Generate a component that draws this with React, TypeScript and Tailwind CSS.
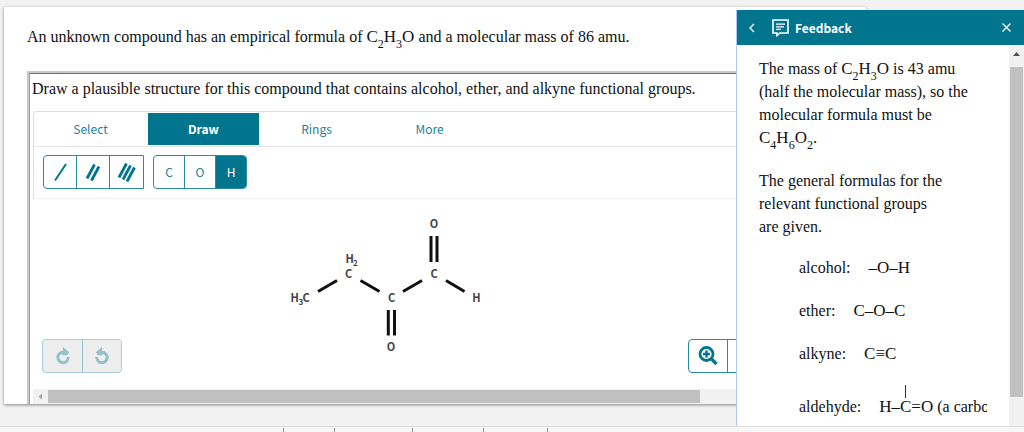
import type { ReactNode } from "react";
import { FaMagnifyingGlassPlus } from "react-icons/fa6";

const serif = "font-['Liberation_Serif',serif]";
const sans = "font-['Noto_Sans_CJK_SC',sans-serif]";

function Sub({ children }: { children: ReactNode }) {
  return <sub className="relative top-[6px] align-baseline text-[12px] leading-none">{children}</sub>;
}

function Formula({ children }: { children: ReactNode }) {
  return <span className="text-[17px] leading-none">{children}</span>;
}

function BondIcon({ count }: { count: number }) {
  const lines = [
    ["M6 20.500 L17 4"],
    ["M5 18.500 L12.500 4.500", "M9.500 20.500 L17 6.500"],
    ["M3 17.500 L10.500 3.500", "M7 19.500 L14.500 5.500", "M11 21.500 L18.500 7.500"],
  ][count - 1];
  return (
    <svg viewBox="0 0 22 24" className="h-6 w-[22px]" fill="none" stroke="#00758d" strokeWidth={count === 1 ? 2 : 2.8}>
      {lines.map((d) => (
        <path key={d} d={d} />
      ))}
    </svg>
  );
}

function RotateIcon({ flip = false }: { flip?: boolean }) {
  return (
    <svg viewBox="0 0 16 18" className={flip ? "h-[18px] w-4 -scale-x-100" : "h-[18px] w-4"}>
      <path d="M8.500 5.300 A5.200 5.200 0 1 0 13.200 10" fill="none" stroke="#94c1cb" strokeWidth="3" />
      <path d="M8 0 L14 5 L12.500 8 L7.500 8.500 Z" fill="#94c1cb" />
    </svg>
  );
}

const tabs = ["Select", "Draw", "Rings", "More"];
const bonds = ["Single bond", "Double bond", "Triple bond"];
const atoms = ["C", "O", "H"];

function Toolbar() {
  return (
    <div className="rounded-tl border-t border-l border-[#dedede]">
      <div className="flex h-[35px] items-start border-b border-[#e4e4e4] pt-px">
        {tabs.map((t) => (
          <button
            key={t}
            type="button"
            className={
              t === "Draw"
                ? "mx-px h-8 w-[111px] bg-[#00758d] text-[12px] font-bold text-white"
                : "h-8 w-[113px] text-[12px] text-[#1a8499]"
            }
          >
            {t}
          </button>
        ))}
      </div>
      <div className="flex gap-[9px] border-b border-[#eeeeee] px-[9px] pt-2 pb-[9px]">
        <div className="flex h-[34px] divide-x divide-[#2a8ba0] overflow-hidden rounded-l border border-[#2a8ba0]">
          {bonds.map((b, i) => (
            <button key={b} type="button" aria-label={b} className="flex w-[33px] items-center justify-center">
              <BondIcon count={i + 1} />
            </button>
          ))}
        </div>
        <div className="flex h-[34px] divide-x divide-[#2a8ba0] overflow-hidden rounded border border-[#2a8ba0]">
          {atoms.map((a) => (
            <button
              key={a}
              type="button"
              className={a === "H" ? "w-[30px] bg-[#00758d] text-[12px] text-white" : "w-[31px] text-[12px] text-[#1a8499]"}
            >
              {a}
            </button>
          ))}
        </div>
      </div>
    </div>
  );
}

function Molecule() {
  return (
    <svg width="200" height="144" viewBox="286 212 200 144" className="ml-[253px]" role="img" aria-label="Lewis structure">
      <g stroke="#111" strokeWidth="3" fill="none">
        <path d="M318 291.500 L337 280.500 M360.500 280.500 L379.500 291.500 M403 291.500 L422 280.500 M446 280.500 L464.500 291.500" />
        <path d="M431 236 V262 M437 236 V262 M388.300 310 V335.500 M394.500 310 V335.500" />
      </g>
      <g fill="#444" fontSize="11" fontWeight="700" fontFamily="'Noto Sans CJK SC', sans-serif">
        <text x="434" y="227.500" textAnchor="middle">O</text>
        <text x="345.500" y="263">H</text>
        <text x="353" y="266" fontSize="8">2</text>
        <text x="348.500" y="277.500" textAnchor="middle">C</text>
        <text x="290.500" y="301.500">H</text>
        <text x="298.500" y="304.500" fontSize="8">3</text>
        <text x="302.500" y="301.500">C</text>
        <text x="391.500" y="301.500" textAnchor="middle">C</text>
        <text x="434" y="277.500" textAnchor="middle">C</text>
        <text x="476.500" y="301.500" textAnchor="middle">H</text>
        <text x="391" y="350.500" textAnchor="middle">O</text>
      </g>
    </svg>
  );
}

function Canvas() {
  return (
    <div className="relative h-[190px] pt-[13px]">
      <Molecule />
      <div className="absolute right-[98px] bottom-4 left-[9px] flex justify-between">
        <div className="flex h-[34px] divide-x divide-[#94c1cb] rounded border border-[#a9ced6] bg-[#eeeeee]">
          <button type="button" aria-label="Redo" className="flex w-10 items-center justify-center">
            <RotateIcon />
          </button>
          <button type="button" aria-label="Undo" className="flex w-[38px] items-center justify-center">
            <RotateIcon flip />
          </button>
        </div>
        <div className="flex h-[34px] divide-x divide-[#2a8ba0] rounded border border-[#2a8ba0]">
          <button type="button" aria-label="Zoom in" className="flex w-[39px] items-center justify-center text-[#00758d]">
            <svg viewBox="0 0 20 20" className="h-5 w-5" fill="none" stroke="currentColor">
              <circle cx="8.500" cy="8" r="6.500" strokeWidth="2.800" />
              <path d="M8.500 4.500 V11.500 M5 8 H12" strokeWidth="2.400" />
              <path d="M13 12.500 L18.500 18" strokeWidth="3.200" />
            </svg>
          </button>
          <button type="button" aria-label="Reset zoom" className="flex w-[39px] items-center justify-center text-[#00758d]">
            <FaMagnifyingGlassPlus />
          </button>
        </div>
      </div>
    </div>
  );
}

function Question() {
  return (
    <main className="-mr-[130px] mt-[7px] ml-1 flex h-[397px] min-w-0 flex-1 flex-col bg-white pl-[23px] whitespace-nowrap shadow-[0_1px_3px_rgba(0,0,0,0.45)]">
      <p className={`${serif} h-16 pt-[18px] text-[16px] leading-6 text-[#111]`}>
        An unknown compound has an empirical formula of{" "}
        <Formula>
          C<Sub>2</Sub>H<Sub>3</Sub>O
        </Formula>{" "}
        and a molecular mass of 86 amu.
      </p>
      <section className="min-h-0 flex-1 overflow-hidden bg-[#c8c8c8] pt-[2px] pl-[2px]">
        <div className="flex h-full flex-col border-t border-l border-t-[#c5455a] border-l-[#e0808f] bg-white pl-[2px]">
          <p className={`${serif} h-[37px] pt-[3px] text-[16px] leading-6 text-[#111]`}>
            Draw a plausible structure for this compound that contains alcohol, ether, and alkyne functional groups.
          </p>
          <div className="pl-px">
            <Toolbar />
            <Canvas />
          </div>
          <div className="ml-px flex h-[15px] items-center bg-[#f1f1f1]">
            <svg viewBox="0 0 15 15" className="h-[15px] w-[15px]" fill="#a3a3a3">
              <path d="M9 4.500 V10.500 L5.500 7.500 Z" />
            </svg>
            <div className="h-[13px] w-[652px] bg-[#c1c1c1]" />
          </div>
        </div>
      </section>
    </main>
  );
}

function Group({ name, children }: { name: string; children: ReactNode }) {
  return (
    <div className="flex h-[23px] gap-[18px]">
      <dt>{name}:</dt>
      <dd>{children}</dd>
    </div>
  );
}

function Feedback() {
  return (
    <aside className="relative z-10 mt-[10px] flex h-[416px] w-72 shrink-0 flex-col border-l border-[#a9c9f0] bg-white">
      <header className={`${sans} flex h-[35px] shrink-0 items-center bg-[#00758d] pr-[13px] pl-[11px] text-white`}>
        <button type="button" aria-label="Back">
          <svg viewBox="0 0 8 10" className="h-[10px] w-2" fill="none" stroke="white" strokeWidth="1.300">
            <path d="M6 1 L2 5 L6 9" />
          </svg>
        </button>
        <svg viewBox="0 0 17 18" className="ml-4 h-[18px] w-[17px]" fill="none" stroke="white" strokeWidth="1.600">
          <path d="M1 1 H16 V14 H8 L5 16.500 V14 H1 Z" />
          <path d="M4 5.200 H13 M4 7.800 H12 M4 10.400 H9" strokeWidth="1.300" />
        </svg>
        <h2 className="ml-[6px] text-[12px] font-bold">Feedback</h2>
        <button type="button" aria-label="Close" className="ml-auto">
          <svg viewBox="0 0 9 9" className="h-[9px] w-[9px]" stroke="white" strokeWidth="1.300">
            <path d="M0.500 0.500 L8.500 8.500 M8.500 0.500 L0.500 8.500" />
          </svg>
        </button>
      </header>
      <div className="flex min-h-0 flex-1">
        <div className={`${serif} ml-[22px] min-w-0 flex-1 overflow-hidden pt-3 text-[16px] leading-[23px] text-[#111]`}>
          <p className="h-[93px]">
            The mass of{" "}
            <Formula>
              C<Sub>2</Sub>H<Sub>3</Sub>O
            </Formula>{" "}
            is 43 amu
            <br />
            (half the molecular mass), so the
            <br />
            molecular formula must be
            <br />
            <Formula>
              C<Sub>4</Sub>H<Sub>6</Sub>O<Sub>2</Sub>.
            </Formula>
          </p>
          <p className="mt-[19px]">
            The general formulas for the
            <br />
            relevant functional groups
            <br />
            are given.
          </p>
          <dl className="mt-[18px] ml-10 flex flex-col gap-5 whitespace-nowrap">
            <Group name="alcohol">
              <Formula>–O–H</Formula>
            </Group>
            <Group name="ether">
              <Formula>C–O–C</Formula>
            </Group>
            <Group name="alkyne">
              <Formula>C≡C</Formula>
            </Group>
            <div className="mt-[10px]">
              <Group name="aldehyde">
                <Formula>
                  H–
                  <span className="relative">
                    C<span className="absolute -top-3 left-[5px] h-[13px] w-px bg-[#333]" />
                  </span>
                  =O
                </Formula>{" "}
                (a carbonyl)
              </Group>
            </div>
          </dl>
        </div>
        <div className="ml-[22px] flex w-[15px] flex-col bg-[#f1f1f1]">
          <svg viewBox="0 0 15 22" className="h-[22px] w-[15px]" fill="#505050">
            <path d="M4 11 H11 L7.500 7 Z" />
          </svg>
          <div className="mx-px h-[330px] bg-[#c1c1c1]" />
        </div>
      </div>
    </aside>
  );
}

export default function App() {
  return (
    <div className="overflow-hidden bg-[#f2f2f2]">
      <div className={`${sans} flex items-start`}>
        <Question />
        <Feedback />
      </div>
      <footer className="flex h-[6px] border-t border-[#dddddd] bg-[#f7f7f7] pt-px">
        <span className="w-[284px] border-r border-[#999]" />
        <span className="w-[51px] border-r border-[#999]" />
        <span className="w-[78px] border-r border-[#999]" />
        <span className="w-[71px] border-r border-[#999]" />
        <span className="w-16 border-r border-[#999]" />
      </footer>
    </div>
  );
}
